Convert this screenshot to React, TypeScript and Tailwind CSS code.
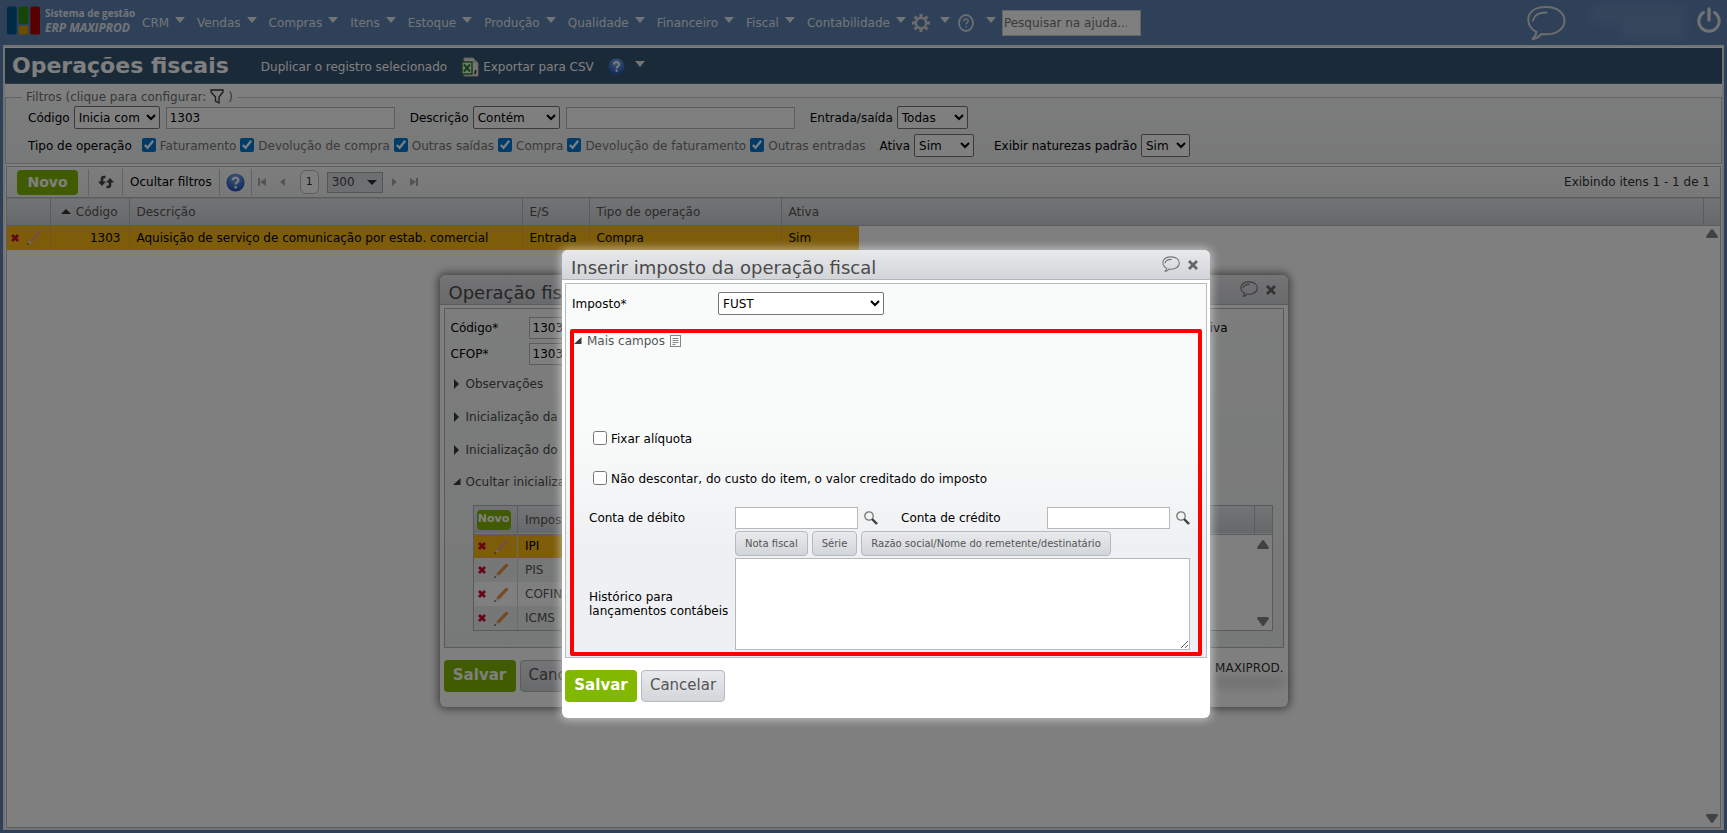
import { useState } from 'react';

const MENU_ITEMS = [
  'CRM',
  'Vendas',
  'Compras',
  'Itens',
  'Estoque',
  'Produção',
  'Qualidade',
  'Financeiro',
  'Fiscal',
  'Contabilidade',
];

const OPERATION_TYPES = [
  'Faturamento',
  'Devolução de compra',
  'Outras saídas',
  'Compra',
  'Devolução de faturamento',
  'Outras entradas',
];

const COLLAPSED_SECTIONS = ['Observações', 'Inicialização da nota fiscal', 'Inicialização do item'];

const TAXES = ['IPI', 'PIS', 'COFINS', 'ICMS'];

const SELECT = 'h-[23px] rounded-xs border border-[#767676] bg-white text-xs';
const INPUT = 'h-[22px] border border-[#b8b8b8] bg-white px-[3px] text-xs';
const PRIMARY = 'h-8 rounded-sm bg-[#82b800] text-[15px] font-bold text-white';
const SECONDARY =
  'rounded-sm border border-[#b4babf] bg-linear-to-b from-[#e9eaed] to-[#d2d5d9] text-[#555]';

function MenuArrow() {
  return (
    <svg width="10" height="6" viewBox="0 0 10 6" className="mb-[5px] shrink-0" aria-hidden="true">
      <path d="M0 0h10L5 6z" fill="#e4e9ef" />
    </svg>
  );
}

function BrandMark() {
  return (
    <svg width="33" height="29" viewBox="0 0 34 29" aria-hidden="true">
      <rect x="0" y="0" width="10" height="29" rx="2" fill="#00578f" />
      <rect x="12" y="0" width="10" height="18" rx="2" fill="#2f8a0c" />
      <rect x="12" y="20" width="10" height="9" rx="2" fill="#d99a00" />
      <rect x="24" y="0" width="10" height="29" rx="2" fill="#b00000" />
    </svg>
  );
}

function GearIcon() {
  return (
    <svg width="18" height="18" viewBox="0 0 18 18" fill="none" stroke="#d7d7d7" aria-hidden="true">
      <circle cx="9" cy="9" r="5.2" strokeWidth="2.400" />
      <path
        d="M9 0v3M9 15v3M0 9h3M15 9h3M2.600 2.600l2.200 2.200M13.200 13.200l2.200 2.200M2.600 15.400l2.200-2.200M13.200 4.800l2.200-2.200"
        strokeWidth="3"
      />
    </svg>
  );
}

function OutlineHelpIcon() {
  return (
    <svg width="16" height="18" viewBox="0 0 16 18" fill="none" stroke="#d7dbe0" aria-hidden="true">
      <ellipse cx="8" cy="9" rx="7" ry="8" strokeWidth="1.800" />
      <path d="M5.800 7.200c0-3 4.400-3 4.400-.3 0 1.700-2.200 1.800-2.200 3.700" strokeWidth="1.400" />
      <circle cx="8" cy="12.800" r=".5" />
    </svg>
  );
}

function HelpIcon({ size }: { size: number }) {
  return (
    <svg width={size} height={size} viewBox="0 0 18 18" aria-hidden="true">
      <defs>
        <radialGradient id="help-blue" cx="50%" cy="25%" r="75%">
          <stop offset="0" stopColor="#7fb0ee" />
          <stop offset="1" stopColor="#1e4fb4" />
        </radialGradient>
      </defs>
      <circle cx="9" cy="9" r="8.600" fill="url(#help-blue)" />
      <path
        d="M6.200 6.900c.1-3.300 5.700-3.200 5.600 0C11.800 8.900 9.100 8.800 9.100 11"
        fill="none"
        stroke="#fff"
        strokeWidth="1.900"
      />
      <circle cx="9.100" cy="13.500" r="1.200" fill="#fff" />
    </svg>
  );
}

function SpeechIcon({ size, color, width }: { size: number; color: string; width: number }) {
  return (
    <svg
      width={size}
      height={(size * 36) / 40}
      viewBox="0 0 40 36"
      fill="none"
      stroke={color}
      strokeWidth={width}
      strokeLinejoin="round"
      aria-hidden="true"
    >
      <path d="M10.500 27C-2.500 20.500-1 2 20 2c11.500 0 18.500 6 18.500 13.800 0 8.500-9 15-23 13.200-2.500 2.800-5.500 4.600-9 5.300 2-2 3.500-4 4-7.300z" />
      <path d="M7 15.500c1-5 6-8 13.500-8" strokeLinecap="round" />
    </svg>
  );
}

function PowerIcon() {
  return (
    <svg width="24" height="26" viewBox="0 0 24 26" fill="none" stroke="#e2e2e2" strokeLinecap="round" aria-hidden="true">
      <path d="M6.500 5.500a10.200 10.200 0 1 0 11 0" strokeWidth="3" />
      <path d="M12 2v11" strokeWidth="3.400" />
    </svg>
  );
}

function SheetIcon() {
  return (
    <svg width="18" height="20" viewBox="0 0 18 20" aria-hidden="true">
      <path d="M3 1h9l5 5v13H3z" fill="#e9e9e9" stroke="#b9b9b9" />
      <path d="M12 1v5h5" fill="#ccc" />
      <rect x="1" y="5" width="10" height="12" fill="#e9f3e6" stroke="#2d7d32" strokeWidth="1.500" />
      <path d="M3 7.500l6 7M9 7.500l-6 7" stroke="#2d7d32" strokeWidth="2" />
      <path d="M14.500 13v2.500l-1 1.500" stroke="#333" strokeWidth="1.600" fill="none" />
    </svg>
  );
}

function FunnelIcon() {
  return (
    <svg width="14" height="16" viewBox="0 0 14 16" fill="none" stroke="#333" strokeWidth="1.300" aria-hidden="true">
      <path d="M1 1h12v2L9 8v6l-3.500-2V8L1 3z" />
    </svg>
  );
}

function RefreshIcon() {
  return (
    <svg width="16" height="14" viewBox="0 0 16 14" aria-hidden="true">
      <path d="M7.500 2H6Q4 2 4 4v4" fill="none" stroke="#444" strokeWidth="2.600" />
      <path d="M0 6.500h8L4 11z" fill="#444" />
      <path d="M8.500 12H10q2 0 2-2V6" fill="none" stroke="#444" strokeWidth="2.600" />
      <path d="M8 7.500h8L12 3z" fill="#444" />
    </svg>
  );
}

function DeleteIcon() {
  return (
    <svg width="8" height="8" viewBox="0 0 8 8" aria-hidden="true">
      <path d="M1 1l6 6M7 1L1 7" stroke="#c8102e" strokeWidth="2.800" />
    </svg>
  );
}

function PencilIcon({ faded }: { faded?: boolean }) {
  return (
    <svg width="15" height="15" viewBox="0 0 15 15" aria-hidden="true">
      <path d="M2.500 10.500L11.500 1q2-1 3 1.500L5 12.500z" fill={faded ? '#f0a070' : '#ec9540'} />
      <path d="M2.500 10.500L0 15l5-2.500z" fill="#e8d3bd" />
      <path d="M0 15l1-2 1.200 1.200z" fill="#333" />
    </svg>
  );
}

function CloseIcon() {
  return (
    <svg width="10" height="10" viewBox="0 0 10 10" aria-hidden="true">
      <path d="M1 1l8 8M9 1L1 9" stroke="#666" strokeWidth="2.800" />
    </svg>
  );
}

function SearchIcon() {
  return (
    <svg width="14" height="14" viewBox="0 0 14 14" fill="none" aria-hidden="true">
      <circle cx="5" cy="5" r="4.200" stroke="#777" strokeWidth="1.300" />
      <path d="M8 8l5 5" stroke="#3c3c3c" strokeWidth="2.400" />
    </svg>
  );
}

function NoteIcon() {
  return (
    <svg width="11" height="12" viewBox="0 0 11 12" fill="none" stroke="#858585" aria-hidden="true">
      <rect x=".5" y=".5" width="10" height="11" />
      <path d="M2.500 3.500h6M2.500 5.500h6M2.500 7.500h6M2.500 9.500h3" />
    </svg>
  );
}

function Triangle({ direction }: { direction: 'right' | 'open' }) {
  return (
    <svg width="8" height="10" viewBox="0 0 8 10" className="shrink-0" fill="#3a3a3a" aria-hidden="true">
      <path d={direction === 'right' ? 'M1 0l5 5-5 5z' : 'M7.500 1v7H0z'} />
    </svg>
  );
}

function ScrollArrow({ up }: { up?: boolean }) {
  return (
    <svg width="12" height="9" viewBox="0 0 12 9" fill="#858585" aria-hidden="true">
      <path d={up ? 'M5 .5q1-1 2 0l5 7q0 1-1 1.500H1Q0 8.500 0 7.500z' : 'M5 8.500q1 1 2 0l5-7Q12 .5 11 0H1Q0 .5 0 1.500z'} />
    </svg>
  );
}

function RowActions({ selected }: { selected?: boolean }) {
  return (
    <div className="flex items-center gap-2 pl-1">
      <button aria-label="Excluir">
        <DeleteIcon />
      </button>
      <button aria-label="Editar">
        <PencilIcon faded={selected} />
      </button>
    </div>
  );
}

function TopBar() {
  return (
    <header className="flex h-[45px] shrink-0 items-center pr-[3px] pl-1 text-xs text-[#e4e9ef]">
      <a href="#" className="mb-1 flex items-center gap-[5px]">
        <BrandMark />
        <span className="block w-[97px] font-['Open_Sans',sans-serif] font-bold">
          <span className="block text-[10px] leading-[13px]">Sistema de gestão</span>
          <span className="block text-xs leading-[15px] italic">ERP MAXIPROD</span>
        </span>
      </a>
      <nav className="flex items-center gap-3">
        {MENU_ITEMS.map((item) => (
          <a key={item} href="#" className="flex items-center gap-1.5">
            {item}
            <MenuArrow />
          </a>
        ))}
      </nav>
      <div className="mx-1.5 flex items-center gap-2">
        <button className="flex items-center gap-2.5" aria-label="Configurações">
          <GearIcon />
          <MenuArrow />
        </button>
        <button className="flex items-center gap-3" aria-label="Ajuda">
          <OutlineHelpIcon />
          <MenuArrow />
        </button>
      </div>
      <input
        type="search"
        aria-label="Pesquisar na ajuda"
        placeholder="Pesquisar na ajuda..."
        className="h-[26px] w-[139px] border border-[#ccc] bg-white px-px text-xs placeholder:text-[#757575]"
      />
      <button className="mr-[13px] ml-auto" aria-label="Chat">
        <SpeechIcon size={40} color="#d9d9d9" width={2} />
      </button>
      <div className="mr-3 flex w-[106px] flex-col items-end gap-1.5 blur-sm" aria-hidden="true">
        <span className="h-3 w-24 bg-white/15" />
        <span className="h-3 w-16 bg-white/15" />
      </div>
      <button aria-label="Sair" className="mb-1.5">
        <PowerIcon />
      </button>
    </header>
  );
}

function TitleBar() {
  return (
    <div className="flex h-9 shrink-0 items-center border-b border-[#587590] bg-[#365470] pt-0.5 pl-[7px] text-xs text-white">
      <h1 className="mr-8 mb-0.5 text-[22px] font-bold">Operações fiscais</h1>
      <a href="#" className="mr-3.5">
        Duplicar o registro selecionado
      </a>
      <a href="#" className="mr-3.5 flex items-center gap-1">
        <SheetIcon />
        Exportar para CSV
      </a>
      <button className="flex items-center gap-2.5" aria-label="Ajuda da página">
        <HelpIcon size={17} />
        <MenuArrow />
      </button>
    </div>
  );
}

function Filters() {
  return (
    <fieldset className="mt-1 shrink-0 border border-[#c2c4c8] bg-linear-to-b from-[#f8faf9] to-[#f0f1f3] px-4 pb-1.5 text-xs">
      <legend className="flex items-center px-1 leading-[18px] text-[#6f6f6f]">
        Filtros (clique para configurar:
        <button className="mx-1" aria-label="Configurar filtros">
          <FunnelIcon />
        </button>
        )
      </legend>
      <div className="flex items-center pl-1.5">
        <label htmlFor="f-codigo-op" className="mr-1">Código</label>
        <select id="f-codigo-op" className={`${SELECT} mr-1.5 w-[86px]`}>
          <option>Inicia com</option>
        </select>
        <input aria-label="Valor do código" defaultValue="1303" className={`${INPUT} mr-[15px] w-[229px]`} />
        <label htmlFor="f-descricao-op" className="mr-1">Descrição</label>
        <select id="f-descricao-op" className={`${SELECT} mr-1.5 w-[87px]`}>
          <option>Contém</option>
        </select>
        <input aria-label="Valor da descrição" className={`${INPUT} mr-[15px] w-[229px]`} />
        <label htmlFor="f-es" className="mr-1">Entrada/saída</label>
        <select id="f-es" className={`${SELECT} w-[71px]`}>
          <option>Todas</option>
        </select>
      </div>
      <div className="mt-[5px] flex items-center pl-1.5">
        <span className="mr-2.5">Tipo de operação</span>
        {OPERATION_TYPES.map((type) => (
          <label key={type} className="mr-1 flex items-center gap-1 text-[#757575]">
            <input type="checkbox" defaultChecked className="mb-0.5 size-3.5 accent-[#0078d4]" />
            {type}
          </label>
        ))}
        <label htmlFor="f-ativa" className="mr-1 ml-2.5">Ativa</label>
        <select id="f-ativa" className={`${SELECT} mr-5 w-[60px]`}>
          <option>Sim</option>
        </select>
        <label htmlFor="f-padrao" className="mr-1">Exibir naturezas padrão</label>
        <select id="f-padrao" className={`${SELECT} w-[49px]`}>
          <option>Sim</option>
        </select>
      </div>
    </fieldset>
  );
}

function PagerIcon({ path }: { path: string }) {
  return (
    <svg width="9" height="10" viewBox="0 0 9 10" fill="#a8a8a8" aria-hidden="true">
      <path d={path} />
    </svg>
  );
}

function Toolbar() {
  return (
    <div className="flex h-[30px] shrink-0 items-center bg-linear-to-b from-[#fafbfb] to-[#f0f1f1] pl-2.5 text-xs">
      <button className="mr-2.5 h-[25px] w-[61px] rounded-sm bg-[#82b800] text-sm font-bold text-white">Novo</button>
      <button className="flex h-[27px] w-[34px] items-center justify-center border-l border-[#c4c6c9]" aria-label="Atualizar">
        <RefreshIcon />
      </button>
      <button className="h-[27px] border-l border-[#c4c6c9] px-[7px]">Ocultar filtros</button>
      <button className="flex h-[27px] w-[33px] items-center justify-center border-x border-[#c4c6c9]" aria-label="Ajuda da lista">
        <HelpIcon size={19} />
      </button>
      <button className="ml-1.5" aria-label="Primeira página">
        <PagerIcon path="M0 1h2v8H0zM8 1v8L2 5z" />
      </button>
      <button className="ml-3" aria-label="Página anterior">
        <PagerIcon path="M6 1v8L1 5z" />
      </button>
      <button className="ml-3 h-6 w-[19px] rounded-md border border-[#bcbcbc] bg-white text-[11px] text-[#333]">1</button>
      <div className="relative ml-2 flex items-center">
        <select
          aria-label="Itens por página"
          className="h-[21px] w-14 appearance-none border border-[#a9adb3] bg-[#dcdee2] pl-1 text-xs text-[#444]"
        >
          <option>300</option>
        </select>
        <svg width="10" height="5" viewBox="0 0 10 5" className="pointer-events-none absolute right-1.5" aria-hidden="true">
          <path d="M0 0h10L5 5z" fill="#333" />
        </svg>
      </div>
      <button className="ml-2" aria-label="Próxima página">
        <PagerIcon path="M1 1l5 4-5 4z" />
      </button>
      <button className="ml-2.5" aria-label="Última página">
        <PagerIcon path="M0 1l6 4-6 4zM6 1h2v8H6z" />
      </button>
      <span className="mr-2.5 ml-auto text-[#333]">Exibindo itens 1 - 1 de 1</span>
    </div>
  );
}

const HEAD_CELL = 'border-r border-[#b5b8bc] px-[7px] text-left font-normal';

function OperationsTable() {
  return (
    <table className="w-full table-fixed border-collapse text-xs">
      <colgroup>
        <col className="w-[43px]" />
        <col className="w-[79px]" />
        <col className="w-[393px]" />
        <col className="w-[67px]" />
        <col className="w-[192px]" />
        <col className="w-[78px]" />
        <col />
        <col className="w-[17px]" />
      </colgroup>
      <thead>
        <tr className="h-7 border-y border-[#b5b8bc] bg-linear-to-b from-[#e6e8ea] to-[#cfd1d5] text-[#555]">
          <th className={HEAD_CELL} aria-label="Ações" />
          <th className={HEAD_CELL}>
            <span className="flex items-center justify-end gap-[5px] pr-1">
              <svg width="10" height="5" viewBox="0 0 10 5" fill="#333" aria-hidden="true">
                <path d="M5 0l5 5H0z" />
              </svg>
              Código
            </span>
          </th>
          <th className={HEAD_CELL}>Descrição</th>
          <th className={HEAD_CELL}>E/S</th>
          <th className={HEAD_CELL}>Tipo de operação</th>
          <th className="px-[7px] text-left font-normal">Ativa</th>
          <th className="border-r border-[#b5b8bc]" />
          <th />
        </tr>
      </thead>
      <tbody>
        <tr className="h-6">
          <td className="border-r border-[#e0b040] bg-[#fab814]">
            <RowActions selected />
          </td>
          <td className="border-r border-[#e0b040] bg-[#fab814] pr-2 text-right">1303</td>
          <td className="border-r border-[#e0b040] bg-[#fab814] px-[7px]">
            Aquisição de serviço de comunicação por estab. comercial
          </td>
          <td className="border-r border-[#e0b040] bg-[#fab814] px-[7px]">Entrada</td>
          <td className="border-r border-[#e0b040] bg-[#fab814] px-[7px]">Compra</td>
          <td className="bg-[#fab814] px-[7px]">Sim</td>
        </tr>
      </tbody>
    </table>
  );
}

function DialogHeader({ title, onClose }: { title: string; onClose?: () => void }) {
  return (
    <div className="flex h-[30px] items-center rounded-t-md border-b border-[#b1b6bc] bg-linear-to-b from-[#e8e9eb] to-[#d2d4d8] pr-3 pl-[9px]">
      <h2 className="mt-1.5 text-lg leading-6 text-[#4a4a4a]">{title}</h2>
      <button className="mr-2 ml-auto" aria-label="Comentar">
        <SpeechIcon size={18} color="#777" width={2.4} />
      </button>
      <button aria-label="Fechar" onClick={onClose}>
        <CloseIcon />
      </button>
    </div>
  );
}

function OperationDialog() {
  return (
    <section className="w-[848px] rounded-md bg-white pb-[15px] text-xs shadow-[0_0_8px_2px_rgba(0,0,0,0.5)]">
      <DialogHeader title="Operação fiscal" />
      <div className="mx-1 mt-[3px] border border-[#b1b4be] bg-linear-to-b from-[#f8faf9] to-[#eff1f1] pt-2 pr-2.5 pb-4 pl-1.5">
        <div className="flex items-center">
          <label htmlFor="op-codigo" className="w-[78px]">Código*</label>
          <input id="op-codigo" defaultValue="1303" className={`${INPUT} w-20`} />
          <label className="mr-[45px] ml-auto flex items-center gap-1">
            <input type="checkbox" defaultChecked />
            Ativa
          </label>
        </div>
        <div className="mt-1 flex items-center">
          <label htmlFor="op-cfop" className="w-[78px]">CFOP*</label>
          <input id="op-cfop" defaultValue="1303" className={`${INPUT} w-20`} />
        </div>
        <div className="mt-0.5 flex flex-col text-[#4a4a4a]">
          {COLLAPSED_SECTIONS.map((section) => (
            <button key={section} className="flex h-[33px] items-center gap-[5px] pl-0.5">
              <Triangle direction="right" />
              {section}
            </button>
          ))}
          <button className="flex h-8 items-center gap-[5px] pl-0.5">
            <Triangle direction="open" />
            Ocultar inicialização de impostos
          </button>
        </div>
        <div className="relative mt-[7px] ml-[22px] h-[126px] border border-[#b1b4be] bg-white">
          <table className="w-full table-fixed border-collapse">
            <colgroup>
              <col className="w-11" />
              <col className="w-[300px]" />
              <col />
              <col className="w-[17px]" />
            </colgroup>
            <thead>
              <tr className="h-7 border-b border-[#b5b8bc] bg-linear-to-b from-[#e6e8ea] to-[#cfd1d5] text-[#555]">
                <th className="border-r border-[#b5b8bc] pl-[3px] text-left">
                  <button className="h-5 w-[34px] rounded-sm bg-[#82b800] text-[11px] font-bold text-white">Novo</button>
                </th>
                <th className="px-[7px] text-left font-normal">Imposto</th>
                <th className="border-r border-[#b5b8bc]" />
                <th />
              </tr>
            </thead>
            <tbody>
              {TAXES.map((tax, i) => (
                <tr key={tax} className={i === 0 ? 'h-6' : 'h-6 text-[#555]'}>
                  <td className={`border-r border-[#d4d4d4] ${i === 0 ? 'bg-[#fab814]' : i % 2 ? 'bg-[#edefee]' : ''}`}>
                    <RowActions selected={i === 0} />
                  </td>
                  <td className={`px-[7px] ${i === 0 ? 'bg-[#fab814]' : i % 2 ? 'bg-[#edefee]' : ''}`}>{tax}</td>
                </tr>
              ))}
            </tbody>
          </table>
          <div className="absolute right-[3px] bottom-1 flex h-[86px] flex-col justify-between">
            <ScrollArrow up />
            <ScrollArrow />
          </div>
        </div>
      </div>
      <div className="mx-1 mt-3 flex gap-1">
        <button className={`${PRIMARY} w-[72px]`}>Salvar</button>
        <button className={`${SECONDARY} h-8 w-[84px] text-[15px]`}>Cancelar</button>
        <div className="ml-auto text-right text-[#333]">
          <p>MAXIPROD.</p>
          <div className="ml-auto h-3 w-[70px] bg-black/10 blur-xs" />
        </div>
      </div>
    </section>
  );
}

function AccountField({ id, label }: { id: string; label: string }) {
  return (
    <div className="flex items-center">
      <label htmlFor={id} className="w-[146px]">
        {label}
      </label>
      <input id={id} className={`${INPUT} w-[123px]`} />
      <button className="ml-1.5" aria-label={`Pesquisar ${label}`}>
        <SearchIcon />
      </button>
    </div>
  );
}

function TaxDialog({ onClose }: { onClose: () => void }) {
  const [expanded, setExpanded] = useState(true);

  return (
    <section
      role="dialog"
      aria-label="Inserir imposto da operação fiscal"
      className="w-[648px] rounded-md bg-white pb-4 text-xs shadow-[0_0_8px_2px_rgba(255,255,255,0.5)]"
    >
      <DialogHeader title="Inserir imposto da operação fiscal" onClose={onClose} />
      <div className="mx-[3px] mt-[3px] border border-[#b7bcc4] bg-linear-to-b from-[#f9fbfa] from-40% to-[#eff0f3] to-70% pt-2 pb-px">
        <div className="flex items-center pl-1.5">
          <label htmlFor="imposto" className="w-[146px]">Imposto*</label>
          <select id="imposto" className={`${SELECT} w-[166px]`}>
            <option>FUST</option>
          </select>
        </div>
        <div className="mx-1 mt-3.5 rounded-xs border-4 border-[#fe0000] pr-2 pb-0.5 pl-[15px]">
          <button
            className="-ml-[15px] flex h-4 items-center gap-[5px] text-[#555]"
            onClick={() => setExpanded(!expanded)}
          >
            <Triangle direction={expanded ? 'open' : 'right'} />
            Mais campos
            <NoteIcon />
          </button>
          {expanded && (
            <>
              <label className="mt-20 flex h-5 items-center gap-1 pl-1">
                <input type="checkbox" className="mb-[3px] size-3.5" />
                Fixar alíquota
              </label>
              <label className="mt-5 flex h-5 items-center gap-1 pl-1">
                <input type="checkbox" className="mb-[3px] size-3.5" />
                Não descontar, do custo do item, o valor creditado do imposto
              </label>
              <div className="mt-[18px] flex justify-between">
                <AccountField id="debito" label="Conta de débito" />
                <AccountField id="credito" label="Conta de crédito" />
              </div>
              <div className="mt-0.5 flex items-center">
                <label htmlFor="historico" className="mt-[26px] w-[146px] leading-[14px]">
                  Histórico para
                  <br />
                  lançamentos contábeis
                </label>
                <div className="flex-1">
                  <div className="flex gap-1 text-[10px]">
                    <button className={`${SECONDARY} h-[25px] px-[9px]`}>Nota fiscal</button>
                    <button className={`${SECONDARY} h-[25px] px-[9px]`}>Série</button>
                    <button className={`${SECONDARY} h-[25px] px-[9px]`}>Razão social/Nome do remetente/destinatário</button>
                  </div>
                  <textarea id="historico" className="mt-0.5 block h-[92px] w-full border border-[#b8b8b8] bg-white p-1" />
                </div>
              </div>
            </>
          )}
        </div>
      </div>
      <div className="mx-[3px] mt-3 flex gap-1">
        <button className={`${PRIMARY} w-[72px]`}>Salvar</button>
        <button className={`${SECONDARY} h-8 w-[84px] text-[15px]`} onClick={onClose}>
          Cancelar
        </button>
      </div>
    </section>
  );
}

export default function App() {
  const [taxDialogOpen, setTaxDialogOpen] = useState(true);

  return (
    <div className="relative flex min-h-screen flex-col overflow-hidden bg-[#5c82b2] px-[3px] pb-[3px] font-['DejaVu_Sans',Verdana,sans-serif] text-black">
      <TopBar />
      <main className="flex flex-1 flex-col border-2 border-[#e6e6e6] bg-white pt-px">
        <TitleBar />
        <Filters />
        <div className="mx-px mt-0.5 flex flex-1 flex-col border border-[#b9bcc0]">
          <Toolbar />
          <div className="relative flex-1">
            <OperationsTable />
            <div className="absolute top-8 right-0.5 bottom-1 flex flex-col justify-between">
              <ScrollArrow up />
              <ScrollArrow />
            </div>
          </div>
        </div>
      </main>

      <div className="absolute inset-0 flex items-start justify-center pt-[275px]">
        <OperationDialog />
      </div>
      {taxDialogOpen && (
        <div className="absolute inset-0 flex items-start justify-center bg-black/50 pt-[250px] pl-[45px]">
          <TaxDialog onClose={() => setTaxDialogOpen(false)} />
        </div>
      )}
    </div>
  );
}
